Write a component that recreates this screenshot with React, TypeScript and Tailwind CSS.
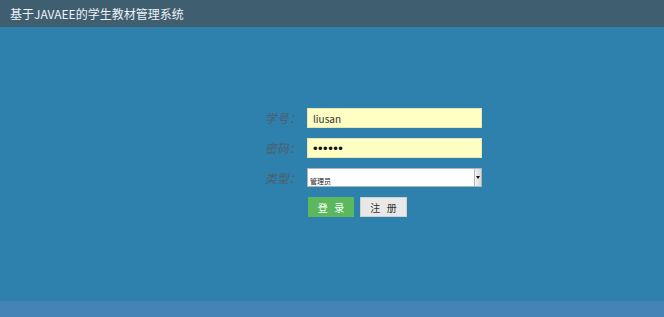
import { useState } from "react";

// Login page of the textbook management system: dark title bar, blue body,
// a small three-row form and two buttons.

const FONT = { fontFamily: '"Noto Sans CJK SC", "Noto Sans", sans-serif' };

function Label({ text }: { text: string }) {
  return (
    <span className="flex w-[40px] shrink-0 justify-end pr-[1px]">
      <span className="inline-block -skew-x-12 text-[12px] leading-none text-[#4c5e6e]">{text}</span>
    </span>
  );
}

export default function App() {
  const [user, setUser] = useState("liusan");
  const [pwd, setPwd] = useState("123456");

  return (
    <div className="flex h-[317px] w-[664px] flex-col overflow-hidden bg-[#2f81ad]" style={FONT}>
      <header className="flex h-[27px] shrink-0 items-center bg-[#3f5f71] pl-[10px] text-[12px] text-[#eef2f4]">
        基于JAVAEE的学生教材管理系统
      </header>

      <main className="flex-1 pl-[263px] pt-[81px]">
        <div className="flex flex-col gap-[10px]">
          <div className="flex items-center gap-[4px]">
            <Label text="学号：" />
            <input
              value={user}
              onChange={(e) => setUser(e.target.value)}
              className="h-[20px] w-[175px] border border-[#e6e6b8] bg-[#ffffc4] px-[5px] text-[10px] text-[#333] outline-none"
            />
          </div>
          <div className="flex items-center gap-[4px]">
            <Label text="密码：" />
            <input
              type="password"
              value={pwd}
              onChange={(e) => setPwd(e.target.value)}
              className="h-[20px] w-[175px] border border-[#e6e6b8] bg-[#ffffc4] px-[5px] text-[13px] tracking-[0.5px] text-[#111] outline-none"
              style={{ fontFamily: '"Liberation Sans", sans-serif' }}
            />
          </div>
          <div className="flex items-center gap-[4px]">
            <Label text="类型：" />
            <div className="flex h-[19px] w-[175px] border border-[#a9b7c2] bg-white">
              <span className="flex flex-1 items-end pb-[1px] pl-[2px] text-[7px] leading-none text-[#222]">管理员</span>
              <span className="flex w-[7px] items-center justify-center border-l border-[#b5b5b5] bg-gradient-to-r from-[#f2f2f2] to-[#d8d8d8]">
                <span className="h-0 w-0 border-x-[2px] border-t-[3px] border-x-transparent border-t-[#111]" />
              </span>
            </div>
          </div>
          <div className="flex items-center gap-[6px] pl-[45px]">
            <button className="h-[20px] w-[46px] bg-[#5cb85c] text-[10px] text-white">
              登&nbsp;&nbsp;&nbsp;录
            </button>
            <button className="h-[20px] w-[47px] border border-[#d0d0d0] bg-[#e8e8e8] text-[10px] text-[#333]">
              注&nbsp;&nbsp;&nbsp;册
            </button>
          </div>
        </div>
      </main>

      <footer className="h-[16px] shrink-0 bg-[#4583b6]" />
    </div>
  );
}
